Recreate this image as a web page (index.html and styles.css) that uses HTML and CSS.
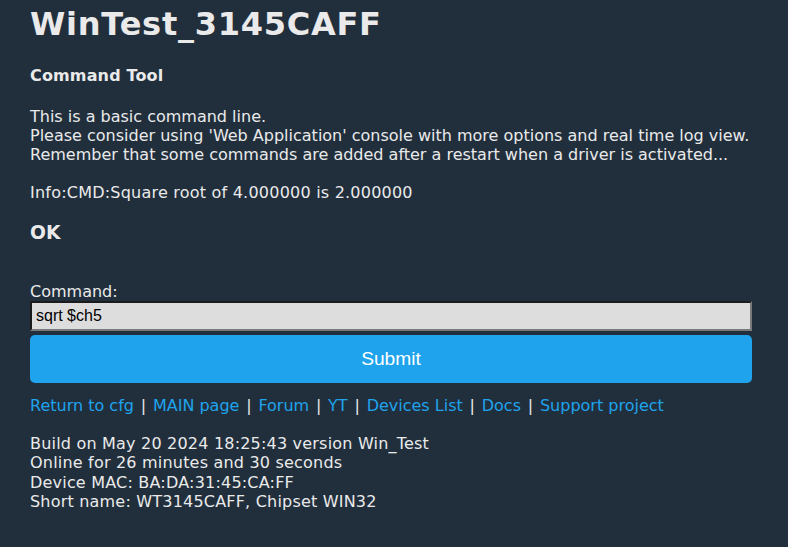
FILE: index.html
```html
<!DOCTYPE html>
<html>
<head>
<meta charset="utf-8">
<title>WinTest_3145CAFF</title>
<link rel="stylesheet" href="styles.css">
</head>
<body>
<div class="page">
  <h1 class="title">WinTest_3145CAFF</h1>
  <h4 class="subtitle">Command Tool</h4>
  <p class="text">This is a basic command line.<br>Please consider using 'Web Application' console with more options and real time log view.<br>Remember that some commands are added after a restart when a driver is activated...<br><br><span class="log">Info:CMD:Square root of 4.000000 is 2.000000</span></p>
  <h3 class="result">OK</h3>
  <form class="cmdform">
    <label class="label" for="cmd">Command:</label>
    <input class="input" id="cmd" type="text" value="sqrt $ch5">
    <button class="submit" type="button">Submit</button>
  </form>
  <div class="links">
    <a href="#">Return to cfg</a><span class="sep">|</span><a href="#">MAIN page</a><span class="sep">|</span><a href="#">Forum</a><span class="sep">|</span><a href="#">YT</a><span class="sep">|</span><a href="#">Devices List</a><span class="sep">|</span><a href="#">Docs</a><span class="sep">|</span><a href="#">Support project</a>
  </div>
  <div class="info">Build on May 20 2024 18:25:43 version Win_Test<br>Online for 26 minutes and 30 seconds<br>Device MAC: BA:DA:31:45:CA:FF<br>Short name: WT3145CAFF, Chipset WIN32</div>
</div>
</body>
</html>
```
FILE: styles.css
```css
html, body {
  margin: 0;
  padding: 0;
  background: #212f3d;
}
body {
  color: #eaeaea;
  font-family: "DejaVu Sans", Verdana, sans-serif;
  font-size: 16px;
  line-height: 19.4px;
}
.page {
  width: 722px;
  padding: 5px 36px 0 30px;
}
.title {
  margin: 0;
  font-size: 32px;
  line-height: 39px;
  font-weight: bold;
  letter-spacing: 0.75px;
}
.subtitle {
  margin: 22px 0 0;
  font-size: 16px;
  line-height: 19px;
  font-weight: bold;
  letter-spacing: 0.15px;
}
.text {
  margin: 22px 0 0;
  line-height: 19px;
}
.log {
  letter-spacing: 0.22px;
}
.result {
  margin: 20px 0 0;
  font-size: 18.72px;
  line-height: 22px;
  font-weight: bold;
}
.cmdform {
  margin: 38px 0 0;
  display: flex;
  flex-direction: column;
}
.label {
  line-height: 19px;
}
.input {
  box-sizing: border-box;
  width: 100%;
  height: 30px;
  margin: 0;
  padding: 4px;
  border: 2px solid;
  border-color: #1b1b1b #7a7a7a #7a7a7a #1b1b1b;
  background: #dddddd;
  color: #000;
  font-family: "Liberation Sans", Arial, sans-serif;
  font-size: 16px;
  outline: none;
}
.submit {
  margin-top: 4px;
  width: 100%;
  height: 48px;
  border: 0;
  border-radius: 5px;
  background: #1fa3ec;
  color: #fff;
  font-family: "Liberation Sans", Arial, sans-serif;
  font-size: 19.2px;
  cursor: pointer;
}
.links {
  margin-top: 13px;
  line-height: 19px;
}
.links a {
  color: #1fa3ec;
  text-decoration: none;
}
.sep {
  padding: 0 6.8px;
}
.info {
  margin-top: 19px;
  letter-spacing: 0.2px;
}
```
